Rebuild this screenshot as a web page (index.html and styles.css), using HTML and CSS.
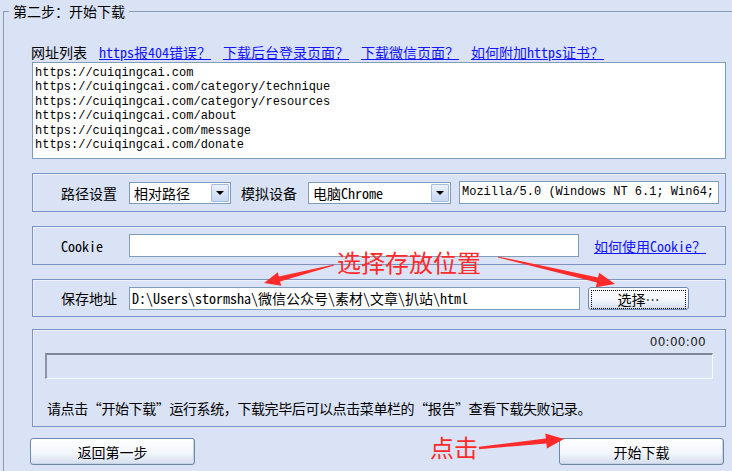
FILE: index.html
```html
<!DOCTYPE html>
<html lang="zh-CN">
<head>
    <meta charset="UTF-8">
    <meta name="viewport" content="width=device-width, initial-scale=1.0">
    <title>第二步：开始下载</title>
    <link rel="stylesheet" href="styles.css">
</head>
<body>

<fieldset class="step">
    <legend>第二步：开始下载</legend>
    <div class="step-body">

        <!-- url list -->
        <div class="url-head">
            <span class="url-label">网址列表</span>
            <a href="#" class="help">https报404错误？</a>
            <a href="#" class="help">下载后台登录页面？</a>
            <a href="#" class="help">下载微信页面？</a>
            <a href="#" class="help">如何附加https证书？</a>
        </div>
        <textarea class="url-list" readonly>https://cuiqingcai.com
https://cuiqingcai.com/category/technique
https://cuiqingcai.com/category/resources
https://cuiqingcai.com/about
https://cuiqingcai.com/message
https://cuiqingcai.com/donate</textarea>

        <!-- path + device -->
        <div class="panel">
            <span class="field-label">路径设置</span>
            <div class="combo combo-path">
                <span class="combo-text">相对路径</span>
                <span class="combo-btn"></span>
            </div>
            <span class="field-label second">模拟设备</span>
            <div class="combo combo-device">
                <span class="combo-text mixed">电脑Chrome</span>
                <span class="combo-btn"></span>
            </div>
            <div class="text-box ua">Mozilla/5.0 (Windows NT 6.1; Win64;</div>
        </div>

        <!-- cookie -->
        <div class="panel">
            <span class="field-label mixed">Cookie</span>
            <div class="text-box cookie"></div>
            <a href="#" class="help cookie-help">如何使用Cookie？</a>
        </div>

        <!-- save path -->
        <div class="panel panel-save">
            <span class="field-label">保存地址</span>
            <div class="text-box save-path mixed">D:\Users\stormsha\微信公众号\素材\文章\扒站\html</div>
            <button class="pick-btn"><span class="focus-ring">选择…</span></button>
        </div>

        <!-- progress -->
        <div class="panel panel-progress">
            <div class="timer">00:00:00</div>
            <div class="progress"></div>
            <p class="tip">请点击“开始下载”运行系统，下载完毕后可以点击菜单栏的“报告”查看下载失败记录。</p>
        </div>

        <div class="actions">
            <button class="big-btn">返回第一步</button>
            <button class="big-btn">开始下载</button>
        </div>
    </div>
</fieldset>

<!-- red notes drawn over the screenshot -->
<span class="note note-pick">选择存放位置</span>
<span class="note note-click">点击</span>
<svg class="arrows" width="732" height="471" viewBox="0 0 732 471">
    <polygon points="334,264.5 278.9,276.6 277.8,272.2 264,283 281.2,285.8 280.1,281.4 334,265.5" />
    <polygon points="498,256.5 598.1,277.6 599.2,272.7 615,284 595.8,287.3 596.9,282.4 498,257.5" />
    <polygon points="478.9,446.8 545.8,438.4 545.3,433.4 564,439 546.9,448.4 546.4,443.4 479.1,449.2" />
</svg>

</body>
</html>
```

FILE: styles.css
```css
body {
    margin: 0;
    width: 732px;
    height: 471px;
    overflow: hidden;
    position: relative;
    background-color: #d9e3f5;
    font-family: "Noto Sans CJK SC", sans-serif;
    font-size: 14px;
    color: #000;
}

.mixed {
    font-family: "Noto Sans Mono CJK SC", "Liberation Mono", "Noto Sans CJK SC", monospace;
}

/* outer group box, open to the right and bottom */
.step {
    box-sizing: border-box;
    margin: 1px 0 0 3px;
    padding: 0;
    width: 729px;
    height: 470px;
    border: 1px solid #8a9ab5;
    border-right: none;
    border-bottom: none;
    min-inline-size: 0;
}

.step legend {
    margin-left: 5px;
    padding: 0 4px;
    line-height: 20px;
    font-size: 14px;
}

.step-body {
    padding-left: 26px;
}

.url-head {
    margin-top: 22px;
    height: 19px;
    line-height: 19px;
    display: flex;
    gap: 12px;
    padding-left: 1px;
}

.help {
    color: #1414ff;
    text-decoration: underline;
    font-family: "Noto Sans Mono CJK SC", "Liberation Mono", "Noto Sans CJK SC", monospace;
    font-size: 14px;
}

.url-list {
    display: block;
    box-sizing: border-box;
    margin: 0 0 0 2px;
    width: 694px;
    height: 97px;
    padding: 3px 2px;
    border: 1px solid #7f9db9;
    background: #fff;
    font-family: "Liberation Mono", monospace;
    font-size: 12px;
    line-height: 14.4px;
    color: #000;
    resize: none;
    overflow: hidden;
    outline: none;
}

/* inner group rows */
.panel {
    box-sizing: border-box;
    margin: 14px 0 0 2px;
    width: 694px;
    height: 39px;
    padding-left: 28px;
    border: 1px solid #7c93bf;
    box-shadow: inset 1px 1px 0 #eef3fb;
    display: flex;
    align-items: center;
}

.panel:first-of-type {
    margin-top: 13px;
}

.field-label {
    min-width: 56px;
    margin-right: 12px;
    white-space: nowrap;
}

.field-label.second {
    margin-left: 10px;
    margin-right: 11px;
}

.combo {
    box-sizing: border-box;
    height: 22px;
    display: flex;
    align-items: center;
    border: 1px solid #7f9db9;
    background: #fff;
}

.combo-path {
    width: 102px;
}

.combo-device {
    width: 143px;
}

.combo-text {
    flex: 1;
    padding-left: 4px;
    line-height: 20px;
    white-space: nowrap;
}

.combo-btn {
    position: relative;
    box-sizing: border-box;
    width: 18px;
    height: 18px;
    margin-right: 1px;
    border: 1px solid #a7bbdf;
    border-radius: 1px;
    background: linear-gradient(#eaf0fc, #c9d8f3);
}

.combo-btn::after {
    content: "";
    position: absolute;
    left: 4px;
    top: 6px;
    border-left: 4px solid transparent;
    border-right: 4px solid transparent;
    border-top: 4px solid #000;
}

.text-box {
    box-sizing: border-box;
    height: 23px;
    padding-left: 2px;
    border: 1px solid #7f9db9;
    background: #fff;
    line-height: 21px;
    white-space: nowrap;
    overflow: hidden;
}

.ua {
    width: 260px;
    margin-left: 8px;
    font-family: "Liberation Mono", monospace;
    font-size: 12px;
}

.cookie {
    width: 450px;
}

.cookie-help {
    margin-left: 15px;
}

.save-path {
    width: 451px;
}

.panel-save {
    height: 38px;
    margin-top: 14px;
}

.pick-btn {
    box-sizing: border-box;
    width: 101px;
    height: 23px;
    margin-left: 8px;
    padding: 2px;
    border: 1px solid #6f86ad;
    border-radius: 3px;
    background: linear-gradient(#ffffff, #f2f5fb 60%, #d3ddef);
    font-family: "Noto Sans CJK SC", sans-serif;
    font-size: 14px;
    color: #000;
}

.focus-ring {
    display: block;
    height: 17px;
    line-height: 17px;
    border: 1px dotted #000;
}

/* progress box */
.panel-progress {
    height: 98px;
    margin-top: 12px;
    padding: 4px 12px 0 12px;
    display: block;
}

.timer {
    text-align: right;
    padding-right: 7px;
    height: 16px;
    line-height: 16px;
    font-family: "DejaVu Sans", sans-serif;
    font-size: 12px;
    letter-spacing: 0.3px;
    color: #222;
}

.progress {
    box-sizing: border-box;
    margin-top: 3px;
    width: 668px;
    height: 26px;
    border-top: 2px solid #7b8698;
    border-left: 2px solid #8a95a8;
    border-bottom: 1px solid #f5f8fd;
    border-right: 1px solid #f5f8fd;
}

.tip {
    margin: 19px 0 0 2px;
    line-height: 20px;
    white-space: nowrap;
    letter-spacing: -0.4px;
}

.actions {
    margin-top: 11px;
    width: 694px;
    display: flex;
    justify-content: space-between;
}

.big-btn {
    box-sizing: border-box;
    width: 165px;
    height: 27px;
    border: 1px solid #6f86ad;
    border-radius: 3px;
    background: linear-gradient(#ffffff, #f3f6fb 55%, #d5dfef);
    box-shadow: inset -1px -1px 0 #c6d2e6;
    font-family: "Noto Sans CJK SC", sans-serif;
    font-size: 14px;
    color: #000;
}

/* red annotation layer */
.note {
    position: absolute;
    color: #ff2b2b;
    font-size: 24px;
    line-height: 24px;
    white-space: nowrap;
}

.note-pick {
    left: 337px;
    top: 250px;
}

.note-click {
    left: 430px;
    top: 435px;
}

.arrows {
    position: absolute;
    left: 0;
    top: 0;
    pointer-events: none;
}

.arrows polygon {
    fill: #ff2b2b;
}
```
